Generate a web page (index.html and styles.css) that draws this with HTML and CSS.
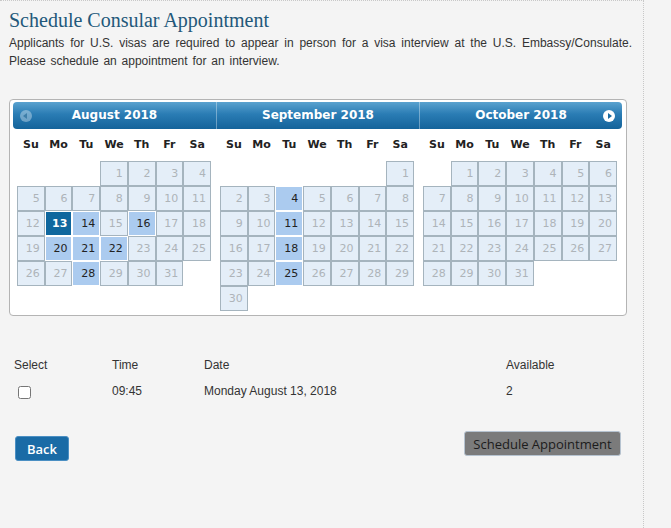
FILE: index.html
```html
<!DOCTYPE html>
<html lang="en">
<head>
  <meta charset="UTF-8">
  <title>Schedule Consular Appointment</title>
  <link rel="stylesheet" href="styles.css">
</head>
<body>

  <div class="content">
    <h1>Schedule Consular Appointment</h1>
    <p class="intro">Applicants for U.S. visas are required to appear in person for a visa interview at the U.S. Embassy/Consulate. Please schedule an appointment for an interview.</p>

    <!-- Calendar -->
    <div class="calendar">

      <div class="month">
        <div class="month-title first">
          <span class="nav prev"></span>
          August 2018
        </div>
        <div class="weekdays"><span>Su</span><span>Mo</span><span>Tu</span><span>We</span><span>Th</span><span>Fr</span><span>Sa</span></div>
        <div class="days">
          <span class="day start-4">1</span><span class="day">2</span><span class="day">3</span><span class="day">4</span>
          <span class="day">5</span><span class="day">6</span><span class="day">7</span><span class="day">8</span><span class="day">9</span><span class="day">10</span><span class="day">11</span>
          <span class="day">12</span><span class="day open picked">13</span><span class="day open">14</span><span class="day">15</span><span class="day open">16</span><span class="day">17</span><span class="day">18</span>
          <span class="day">19</span><span class="day open">20</span><span class="day open">21</span><span class="day open">22</span><span class="day">23</span><span class="day">24</span><span class="day">25</span>
          <span class="day">26</span><span class="day">27</span><span class="day open">28</span><span class="day">29</span><span class="day">30</span><span class="day">31</span>
        </div>
      </div>

      <div class="month">
        <div class="month-title">September 2018</div>
        <div class="weekdays"><span>Su</span><span>Mo</span><span>Tu</span><span>We</span><span>Th</span><span>Fr</span><span>Sa</span></div>
        <div class="days">
          <span class="day start-7">1</span>
          <span class="day">2</span><span class="day">3</span><span class="day open">4</span><span class="day">5</span><span class="day">6</span><span class="day">7</span><span class="day">8</span>
          <span class="day">9</span><span class="day">10</span><span class="day open">11</span><span class="day">12</span><span class="day">13</span><span class="day">14</span><span class="day">15</span>
          <span class="day">16</span><span class="day">17</span><span class="day open">18</span><span class="day">19</span><span class="day">20</span><span class="day">21</span><span class="day">22</span>
          <span class="day">23</span><span class="day">24</span><span class="day open">25</span><span class="day">26</span><span class="day">27</span><span class="day">28</span><span class="day">29</span>
          <span class="day">30</span>
        </div>
      </div>

      <div class="month">
        <div class="month-title last">
          October 2018
          <span class="nav next"></span>
        </div>
        <div class="weekdays"><span>Su</span><span>Mo</span><span>Tu</span><span>We</span><span>Th</span><span>Fr</span><span>Sa</span></div>
        <div class="days">
          <span class="day start-2">1</span><span class="day">2</span><span class="day">3</span><span class="day">4</span><span class="day">5</span><span class="day">6</span>
          <span class="day">7</span><span class="day">8</span><span class="day">9</span><span class="day">10</span><span class="day">11</span><span class="day">12</span><span class="day">13</span>
          <span class="day">14</span><span class="day">15</span><span class="day">16</span><span class="day">17</span><span class="day">18</span><span class="day">19</span><span class="day">20</span>
          <span class="day">21</span><span class="day">22</span><span class="day">23</span><span class="day">24</span><span class="day">25</span><span class="day">26</span><span class="day">27</span>
          <span class="day">28</span><span class="day">29</span><span class="day">30</span><span class="day">31</span>
        </div>
      </div>

    </div>

    <!-- Time slots -->
    <table class="slots">
      <tr>
        <th class="col-select">Select</th>
        <th class="col-time">Time</th>
        <th class="col-date">Date</th>
        <th>Available</th>
      </tr>
      <tr>
        <td><input type="checkbox"></td>
        <td>09:45</td>
        <td>Monday August 13, 2018</td>
        <td>2</td>
      </tr>
    </table>

    <div class="actions">
      <button class="btn-back">Back</button>
      <button class="btn-schedule">Schedule Appointment</button>
    </div>
  </div>

</body>
</html>
```

FILE: styles.css
```css
body {
  margin: 0;
  padding: 0;
  background-color: #f4f4f4;
  font-family: "Liberation Sans", Arial, sans-serif;
  color: #333;
}

.content {
  width: 644px;
  min-height: 528px;
  box-sizing: border-box;
  padding: 7px 11px 0 9px;
  border-top: 1px dotted #c8c8c8;
  border-right: 1px dotted #c8c8c8;
}

h1 {
  margin: 0;
  font-family: "Liberation Serif", Georgia, serif;
  font-size: 20px;
  font-weight: normal;
  line-height: 24px;
  color: #22587a;
}

.intro {
  margin: 2px 0 0;
  font-size: 12px;
  line-height: 18px;
  word-spacing: 1.5px;
  text-align: justify;
  color: #333;
}

/* Calendar */
.calendar {
  width: 618px;
  box-sizing: border-box;
  margin-top: 29px;
  padding: 2px 4px 4px 3px;
  display: flex;
  background-color: #fff;
  border: 1px solid #b4b4b4;
  border-radius: 4px;
  font-family: "DejaVu Sans", Verdana, sans-serif;
}

.month {
  flex: 1;
}

.month-title {
  position: relative;
  height: 27px;
  line-height: 27px;
  text-align: center;
  font-size: 12px;
  font-weight: bold;
  color: #fff;
  background: linear-gradient(#5aa2cf, #2a7cb4 45%, #14639a);
  border-left: 1px solid rgba(255, 255, 255, 0.35);
}

.month-title.first {
  border-left: none;
  border-radius: 4px 0 0 4px;
}

.month-title.last {
  border-radius: 0 4px 4px 0;
}

.nav {
  position: absolute;
  top: 8px;
  width: 12px;
  height: 12px;
  border-radius: 50%;
}

.nav::after {
  content: "";
  position: absolute;
  top: 3px;
  width: 0;
  height: 0;
  border-top: 3px solid transparent;
  border-bottom: 3px solid transparent;
}

.nav.prev {
  left: 7px;
  background-color: rgba(255, 255, 255, 0.35);
}

.nav.prev::after {
  left: 3px;
  border-right: 4px solid #3f7fa9;
}

.nav.next {
  right: 7px;
  background-color: #fff;
}

.nav.next::after {
  left: 5px;
  border-left: 4px solid #1a6aa0;
}

.weekdays {
  display: grid;
  grid-template-columns: repeat(7, 1fr);
  padding: 0 5px 0 4px;
  height: 32px;
  line-height: 32px;
  text-align: center;
  font-size: 11px;
  font-weight: bold;
  color: #222;
}

.days {
  display: grid;
  grid-template-columns: repeat(7, 1fr);
  padding: 0 5px 0 4px;
}

.day {
  height: 25px;
  box-sizing: border-box;
  padding-right: 4px;
  line-height: 23px;
  text-align: right;
  font-size: 11px;
  color: #aeb4b9;
  background-color: #e4eef8;
  border: 1px solid #a5b4be;
}

.day.open {
  color: #222;
  background-color: #abcbef;
  border-color: #fff;
}

.day.picked {
  color: #fff;
  font-weight: bold;
  background-color: #0f679e;
}

.start-2 { grid-column-start: 2; }
.start-4 { grid-column-start: 4; }
.start-7 { grid-column-start: 7; }

/* Time slots */
.slots {
  margin-top: 39px;
  border-collapse: collapse;
  font-size: 12px;
  color: #333;
}

.slots th,
.slots td {
  padding: 0 0 0 5px;
  height: 20px;
  text-align: left;
  font-weight: normal;
}

.slots td {
  height: 26px;
  padding-top: 3px;
  vertical-align: middle;
}

.slots input {
  margin: 5px 3px 3px 4px;
}

.col-select { width: 93px; }
.col-time { width: 87px; }
.col-date { width: 297px; }

.actions {
  width: 618px;
  margin-top: 27px;
  display: flex;
  justify-content: space-between;
  align-items: flex-start;
}

button {
  height: 25px;
  box-sizing: border-box;
  border-radius: 3px;
  font-family: "Open Sans", sans-serif;
  font-size: 13px;
  cursor: pointer;
}

.btn-back {
  width: 54px;
  margin: 5px 0 0 6px;
  padding: 0;
  font-weight: 600;
  color: #fff;
  background-color: #1a6ba6;
  border: 1px solid #4b8fc3;
}

.btn-schedule {
  width: 157px;
  margin-right: 6px;
  padding: 0;
  color: #1c1c1c;
  background-color: #7b7b7b;
  border: 1px solid #b6c3d0;
}
```
